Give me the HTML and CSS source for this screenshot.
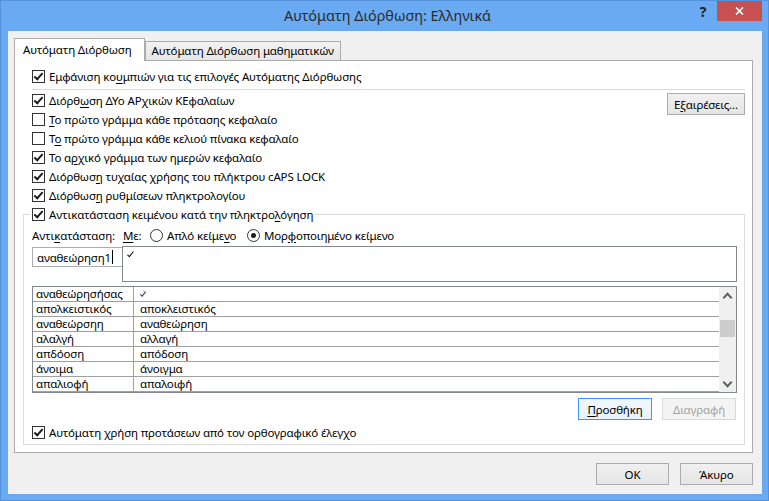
FILE: index.html
```html
<!DOCTYPE html>
<html lang="el">
<head>
    <meta charset="UTF-8">
    <title>Αυτόματη Διόρθωση: Ελληνικά</title>
    <link rel="stylesheet" href="styles.css">
</head>
<body>

<div class="window">
    <!-- Title bar -->
    <div class="titlebar">
        <div></div>
        <div class="title">Αυτόματη Διόρθωση: Ελληνικά</div>
        <div class="caption">
            <span class="help">?</span>
            <span class="close"><svg width="9" height="8" viewBox="0 0 9 8"><path d="M1 0.5 L8 7.5 M8 0.5 L1 7.5" stroke="#fff" stroke-width="1.7"/></svg></span>
        </div>
    </div>

    <div class="client">
        <div class="tabs">
            <div class="tab active">Αυτόματη Διόρθωση</div>
            <div class="tab">Αυτόματη Διόρθωση μαθηματικών</div>
        </div>

        <div class="panel">
            <label class="check first"><span class="box on"></span><span>Εμφάνιση κο<u>υ</u>μπιών για τις επιλογές Αυτόματης Διόρθωσης</span></label>
            <div class="separator"></div>

            <div class="options-row">
                <div class="options">
                    <label class="check"><span class="box on"></span><span>Διόρθ<u>ω</u>ση ΔΥο ΑΡχικών ΚΕφαλαίων</span></label>
                    <label class="check"><span class="box"></span><span><u>Τ</u>ο πρώτο γράμμα κάθε πρότασης κεφαλαίο</span></label>
                    <label class="check"><span class="box"></span><span>Τ<u>ο</u> πρώτο γράμμα κάθε κελιού πίνακα κεφαλαίο</span></label>
                    <label class="check"><span class="box on"></span><span>Το α<u>ρ</u>χικό γράμμα των ημερών κεφαλαίο</span></label>
                    <label class="check"><span class="box on"></span><span>Διόρθωσ<u>η</u> τυχαίας χρήσης του πλήκτρου cAPS LOCK</span></label>
                    <label class="check"><span class="box on"></span><span>Διόρθωσ<u>η</u> ρυθμίσεων πληκτρολογίου</span></label>
                </div>
                <button class="btn exceptions">Ε<u>ξ</u>αιρέσεις...</button>
            </div>

            <!-- Replace text as you type -->
            <fieldset class="group">
                <legend><label class="check"><span class="box on"></span><span>Αντικατάσταση κειμένου κατά την πληκτρο<u>λ</u>όγηση</span></label></legend>

                <div class="replace-head">
                    <span class="w-replace">Αντι<u>κ</u>ατάσταση:</span>
                    <span class="w-with"><u>Μ</u>ε:</span>
                    <label class="radio-label w-plain"><span class="radio"></span><span>Απλό κείμε<u>ν</u>ο</span></label>
                    <label class="radio-label"><span class="radio on"></span><span>Μορ<u>φ</u>οποιημένο κείμενο</span></label>
                </div>

                <div class="replace-fields">
                    <div class="field"><span>αναθεώρηση1</span><span class="caret"></span></div>
                    <div class="field-big"><span class="tick big"></span></div>
                </div>

                <div class="list">
                    <div class="rows">
                        <div class="row"><span>αναθεώρησήσας</span><span><span class="tick"></span></span></div>
                        <div class="row"><span>απολκειστικός</span><span>αποκλειστικός</span></div>
                        <div class="row"><span>αναθεώρσηη</span><span>αναθεώρηση</span></div>
                        <div class="row"><span>αλαλγή</span><span>αλλαγή</span></div>
                        <div class="row"><span>απδόοση</span><span>απόδοση</span></div>
                        <div class="row"><span>άνοιμα</span><span>άνοιγμα</span></div>
                        <div class="row"><span>απαλιοφή</span><span>απαλοιφή</span></div>
                    </div>
                    <div class="scrollbar">
                        <span class="arrow up"></span>
                        <div class="track"><span class="thumb"></span></div>
                        <span class="arrow down"></span>
                    </div>
                </div>

                <div class="list-buttons">
                    <button class="btn focused"><u>Π</u>ροσθήκη</button>
                    <button class="btn" disabled>Διαγραφή</button>
                </div>

                <label class="check last"><span class="box on"></span><span>Αυτόματη <u>χ</u>ρήση προτάσεων από τον ορθογραφικό έλεγχο</span></label>
            </fieldset>
        </div>

        <div class="footer">
            <button class="btn">OK</button>
            <button class="btn">Άκυρο</button>
        </div>
    </div>
</div>

</body>
</html>
```

FILE: styles.css
```css
* {
    box-sizing: border-box;
}
body {
    margin: 0;
    font-family: "Noto Sans", "Open Sans", sans-serif;
    font-size: 11.5px;
    letter-spacing: -0.15px;
    color: #000;
}
u {
    text-underline-offset: 2px;
}

/* window frame */
.window {
    width: 769px;
    height: 501px;
    background: #6aaaf3;
    border: 1px solid #5592dc;
    display: flex;
    flex-direction: column;
}
.titlebar {
    height: 30px;
    display: grid;
    grid-template-columns: 1fr auto 1fr;
}
.title {
    align-self: center;
    font-size: 14.4px;
    letter-spacing: 0;
    color: #2a2a2a;
    padding: 0 0 1px 6px;
}
.caption {
    justify-self: end;
    display: flex;
    margin-right: 6px;
}
.help {
    width: 28px;
    height: 20px;
    display: flex;
    align-items: center;
    justify-content: center;
    font-size: 14px;
    font-weight: bold;
    color: #222;
}
.close {
    width: 45px;
    height: 20px;
    background: #c75050;
    display: flex;
    align-items: center;
    justify-content: center;
}

.client {
    flex: 1;
    margin: 0 6px 6px 7px;
    background: #f0f0f0;
    padding: 7px 9px 0 6px;
}

/* tabs */
.tabs {
    display: flex;
    align-items: flex-end;
    height: 23px;
    margin-bottom: -1px;
}
.tab {
    border: 1px solid #acacac;
    border-bottom: none;
    height: 19px;
    margin-bottom: 1px;
    padding: 0 6px;
    line-height: 17px;
    background: linear-gradient(#f2f2f2, #e6e6e6);
}
.tab.active {
    position: relative;
    z-index: 1;
    height: 23px;
    margin-bottom: 0;
    padding: 0 12px 0 8px;
    line-height: 22px;
    background: #fff;
}
.panel {
    width: 739px;
    background: #fff;
    border: 1px solid #acacac;
    padding: 0 7px 0 8px;
}

/* checkboxes and radios */
.check {
    display: flex;
    align-items: center;
    gap: 4px;
    height: 19px;
    white-space: nowrap;
}
.box {
    width: 13px;
    height: 13px;
    border: 1px solid #333;
    background: #fff;
    display: flex;
    align-items: center;
    justify-content: center;
    flex-shrink: 0;
}
.box.on::after {
    content: "";
    width: 7px;
    height: 3px;
    border-left: 2px solid #1a1a1a;
    border-bottom: 2px solid #1a1a1a;
    transform: rotate(-48deg);
    margin-top: -2px;
}
.check.first {
    margin: 6px 0 0 9px;
}
.separator {
    height: 1px;
    background: #dadada;
    margin: 3px 0 1px 9px;
}
.options-row {
    display: flex;
    justify-content: space-between;
    align-items: flex-start;
}
.options {
    padding-left: 9px;
}
.radio-label {
    display: flex;
    align-items: center;
    gap: 4px;
}
.radio {
    width: 13px;
    height: 13px;
    border: 1px solid #333;
    border-radius: 50%;
    display: flex;
    align-items: center;
    justify-content: center;
}
.radio.on::after {
    content: "";
    width: 5px;
    height: 5px;
    border-radius: 50%;
    background: #1a1a1a;
}

/* buttons */
.btn {
    height: 22px;
    border: 1px solid #acacac;
    background: linear-gradient(#f0f0f0, #e5e5e5);
    font: inherit;
    letter-spacing: inherit;
    color: #000;
    padding: 0;
    width: 74px;
}
.btn.exceptions {
    width: 78px;
    margin-top: 2px;
}
.btn.focused {
    border-color: #3399ff;
    background: linear-gradient(#f3f9ff, #e8f1fb);
}
.btn:disabled {
    border-color: #d9d9d9;
    background: #f4f4f4;
    color: #a2a2a2;
}

/* group box */
.group {
    margin: 0 0 7px;
    min-width: 0;
    border: 1px solid #dcdcdc;
    padding: 0 7px 2px 8px;
}
.group legend {
    padding: 0 2px;
    margin-left: -2px;
    background: #fff;
}
.replace-head {
    display: flex;
    align-items: center;
    height: 22px;
    white-space: nowrap;
}
.w-replace {
    width: 91px;
}
.w-with {
    width: 27px;
}
.w-plain {
    width: 97px;
}
.replace-fields {
    display: flex;
    height: 36px;
}
.field {
    width: 90px;
    height: 20px;
    margin-top: 1px;
    border: 1px solid #abadb3;
    border-right: none;
    padding-left: 4px;
    display: flex;
    align-items: center;
}
.caret {
    width: 1px;
    height: 14px;
    background: #000;
    margin-left: 1px;
}
.field-big {
    flex: 1;
    border: 1px solid #828790;
    padding: 5px 0 0 4px;
}
.tick {
    display: inline-block;
    width: 6px;
    height: 3px;
    border-left: 1px solid #1d3a78;
    border-bottom: 1.5px solid #1d3a78;
    transform: rotate(-50deg);
    vertical-align: 3px;
}
.tick.big {
    display: block;
    width: 7px;
    height: 3px;
    border-color: #000;
}

/* replacement list */
.list {
    margin-top: 4px;
    height: 107px;
    border: 1px solid #828790;
    display: flex;
}
.rows {
    flex: 1;
}
.row {
    display: grid;
    grid-template-columns: 101px 1fr;
    height: 15px;
    border-bottom: 1px solid #a0a0a0;
    line-height: 14px;
    overflow: hidden;
}
.row span:first-child {
    border-right: 1px solid #a0a0a0;
    padding-left: 3px;
}
.row span + span {
    padding-left: 6px;
}
.scrollbar {
    width: 17px;
    background: #f0f0f0;
    display: flex;
    flex-direction: column;
}
.arrow {
    height: 17px;
    display: flex;
    align-items: center;
    justify-content: center;
}
.arrow::after {
    content: "";
    width: 5px;
    height: 5px;
    border-left: 2px solid #606060;
    border-top: 2px solid #606060;
}
.arrow.up::after {
    transform: rotate(45deg);
    margin-top: 3px;
}
.arrow.down::after {
    transform: rotate(-135deg);
    margin-top: -3px;
}
.track {
    flex: 1;
}
.thumb {
    display: block;
    height: 17px;
    margin: 16px 1px 0;
    background: #cdcdcd;
}
.list-buttons {
    display: flex;
    justify-content: flex-end;
    gap: 10px;
    margin-top: 5px;
    padding-right: 1px;
}
.check.last {
    margin-top: 3px;
}

/* dialog buttons */
.footer {
    display: flex;
    justify-content: flex-end;
    gap: 11px;
    margin-top: 10px;
    width: 739px;
}
.footer .btn {
    width: 73px;
}
```
